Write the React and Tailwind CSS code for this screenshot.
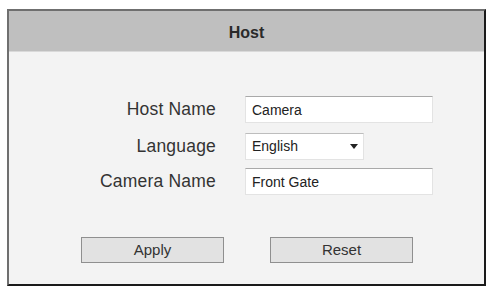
export default function App() {
  const font = { fontFamily: '"Liberation Sans", Arial, sans-serif' }
  return (
    <div className="w-[490px] h-[290px] bg-white pl-[7px] pt-[9px]" style={font}>
      <div className="w-[479px] h-[277px] border-t-2 border-l-2 border-t-[#6f6f6f] border-l-[#6f6f6f] border-r-2 border-b-2 border-r-[#1a1a1a] border-b-[#1a1a1a] bg-[#f3f3f3] flex flex-col">
        {/* Header */}
        <div className="h-[41px] bg-[#bfbfbf] flex items-center justify-center pt-[3px] border-b border-[#d9d9d9]">
          <span className="text-[16px] font-bold text-[#2a2a2a]">Host</span>
        </div>

        {/* Form */}
        <div className="pt-[44px] flex flex-col">
          <Row label="Host Name">
            <input
              readOnly
              value="Camera"
              className="w-[188px] h-[27px] bg-white border border-[#e3e3e3] border-t-[#a9a9a9] px-[6px] text-[14px] text-[#222] outline-none"
            />
          </Row>
          <div className="h-[10px]" />
          <Row label="Language">
            <div className="w-[119px] h-[27px] bg-white border border-[#e3e3e3] border-t-[#bdbdbd] pl-[6px] pr-[4px] flex items-center justify-between text-[14px] text-[#222]">
              <span>English</span>
              <svg width="8" height="5" viewBox="0 0 8 5" className="mr-[1px]">
                <path d="M0 0h8L4 5z" fill="#222" />
              </svg>
            </div>
          </Row>
          <div className="h-[8px]" />
          <Row label="Camera Name">
            <input
              readOnly
              value="Front Gate"
              className="w-[188px] h-[27px] bg-white border border-[#e3e3e3] border-t-[#a9a9a9] px-[6px] text-[14px] text-[#222] outline-none"
            />
          </Row>
        </div>

        {/* Buttons */}
        <div className="pt-[42px] pl-[72px] flex gap-[46px]">
          <button className="w-[143px] h-[26px] bg-[#e2e2e2] border border-[#8f8f8f] text-[15px] text-[#333]">
            Apply
          </button>
          <button className="w-[143px] h-[26px] bg-[#e2e2e2] border border-[#8f8f8f] text-[15px] text-[#333]">
            Reset
          </button>
        </div>
      </div>
    </div>
  )
}

function Row({ label, children }) {
  return (
    <div className="flex items-center">
      <div className="w-[207px] text-right text-[17.5px] tracking-[0.2px] text-[#333]">{label}</div>
      <div className="ml-[29px]">{children}</div>
    </div>
  )
}
